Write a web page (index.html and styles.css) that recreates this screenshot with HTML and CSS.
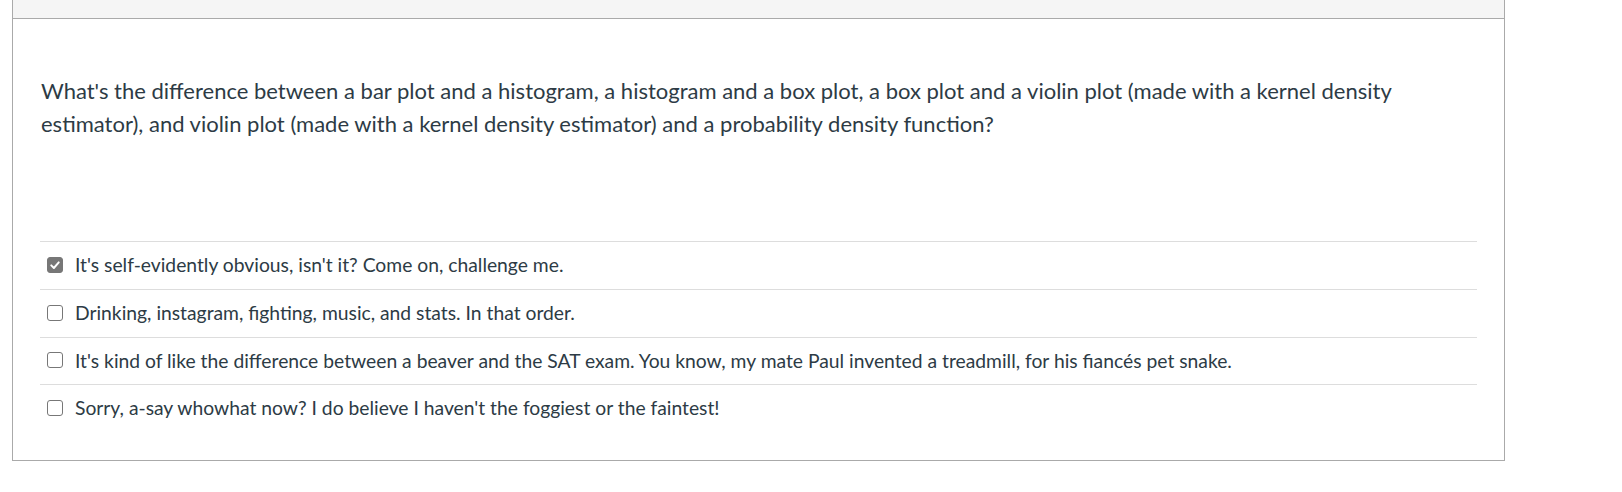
FILE: index.html
```html
<!DOCTYPE html>
<html>
<head>
<meta charset="utf-8">
<link rel="stylesheet" href="styles.css">
</head>
<body>
<div class="card">
  <div class="card-header"></div>
  <div class="card-body">
    <p class="question">What's the difference between a bar plot and a histogram, a histogram and a box plot, a box plot and a violin plot (made with a kernel density estimator), and violin plot (made with a kernel density estimator) and a probability density function?</p>
    <div class="answers">
      <label class="answer">
        <span class="box checked"><svg viewBox="0 0 16 16" width="12" height="12"><path d="M3 8.5 L6.5 12 L13 4.5" fill="none" stroke="#fff" stroke-width="2.6" stroke-linecap="round" stroke-linejoin="round"/></svg></span>
        <span class="answer-text">It's self-evidently obvious, isn't it? Come on, challenge me.</span>
      </label>
      <label class="answer">
        <span class="box"></span>
        <span class="answer-text">Drinking, instagram, fighting, music, and stats. In that order.</span>
      </label>
      <label class="answer">
        <span class="box"></span>
        <span class="answer-text">It's kind of like the difference between a beaver and the SAT exam. You know, my mate Paul invented a treadmill, for his fiancés pet snake.</span>
      </label>
      <label class="answer">
        <span class="box"></span>
        <span class="answer-text">Sorry, a-say whowhat now? I do believe I haven't the foggiest or the faintest!</span>
      </label>
    </div>
  </div>
</div>
</body>
</html>
```
FILE: styles.css
```css
html, body {
  margin: 0;
  padding: 0;
  background: #fff;
}
body {
  font-family: Lato, "Liberation Sans", sans-serif;
  color: #2D3B45;
}
.card {
  margin-left: 12px;
  width: 1491px;
  border-left: 1px solid #aaa;
  border-right: 1px solid #aaa;
  border-bottom: 1px solid #aaa;
}
.card-header {
  height: 18px;
  background: #f5f5f5;
  border-bottom: 1px solid #aaa;
}
.card-body {
  padding: 55px 27px 28px 27px;
}
.question {
  margin: 0 0 0 1px;
  font-size: 22px;
  line-height: 33px;
  min-height: 167px;
}
.answers {
  display: flex;
  flex-direction: column;
}
.answer {
  display: flex;
  align-items: center;
  height: 47px;
  box-sizing: border-box;
  height: 48px;
  padding-bottom: 2px;
  border-top: 1px solid #ddd;
  padding-left: 7px;
  font-size: 19.3px;
}
.answer:nth-child(3) {
  height: 47px;
}
.box {
  width: 14px;
  height: 14px;
  border: 1.5px solid #777;
  border-radius: 3px;
  box-sizing: content-box;
  margin-right: 12px;
  display: flex;
  align-items: center;
  justify-content: center;
  background: #fff;
}
.box.checked {
  background: #777;
}
```
